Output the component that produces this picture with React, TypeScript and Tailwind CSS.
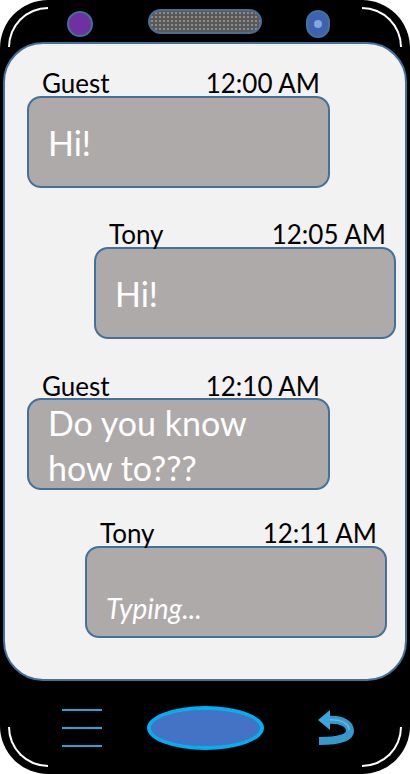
import type { ReactNode } from 'react';

interface MessageProps {
  name: string;
  time: string;
  offset: string;
  width: string;
  spacing: string;
  children: ReactNode;
  bodyClass: string;
}

function Message({ name, time, offset, width, spacing, children, bodyClass }: MessageProps) {
  return (
    <div className={`${offset} ${width} ${spacing}`}>
      <div className="flex h-[26px] justify-between pl-[15px] pr-[10px] text-[26px] leading-[26px] text-black">
        <span>{name}</span>
        <span>{time}</span>
      </div>
      <div
        className={`flex h-[92px] rounded-[14px] border-2 border-[#41719c] bg-[#aeaaaa] pl-[19px] text-white ${bodyClass}`}
      >
        {children}
      </div>
    </div>
  );
}

function BackArrow() {
  return (
    <svg width="44" height="46" viewBox="0 0 44 46" className="ml-[48px]">
      <path
        d="M16 15 C30 14, 38 19, 38 26 C38 33, 26 36, 7 36"
        fill="none"
        stroke="#3aa6de"
        strokeOpacity="0.92"
        strokeWidth="8"
      />
      <path d="M16 15 C30 14, 37 19, 37 25" fill="none" stroke="#7cc6ee" strokeWidth="1.5" strokeOpacity="0.7" />
      <polygon points="6,15 18,5 18,25" fill="#3aa6de" />
    </svg>
  );
}

export default function App() {
  return (
    <div className="h-[774px] w-[410px] bg-white font-['Lato',sans-serif]">
      <div className="relative flex h-full flex-col rounded-[48px] bg-black">
        {/* corner highlights */}
        <div className="absolute left-[8px] top-[7px] h-[40px] w-[40px] rounded-tl-[40px] border-l-2 border-t-2 border-white" />
        <div className="absolute right-[8px] top-[7px] h-[40px] w-[40px] rounded-tr-[40px] border-r-2 border-t-2 border-white" />
        <div className="absolute bottom-[7px] left-[8px] h-[40px] w-[40px] rounded-bl-[40px] border-b-2 border-l-2 border-white" />
        <div className="absolute bottom-[7px] right-[8px] h-[40px] w-[40px] rounded-br-[40px] border-b-2 border-r-2 border-white" />

        <div className="relative flex h-[42px] items-start">
          <div className="ml-[67px] mt-[11px] h-[26px] w-[26px] rounded-full border-2 border-[#41719c] bg-[#7030a0]" />
          <div className="ml-[55px] mt-[9px] h-[25px] w-[114px] rounded-full border-2 border-[#4a6f96] bg-[#595959] bg-[radial-gradient(#8c8c8c_0.8px,transparent_1px)] bg-[length:4px_4px]" />
          <div className="ml-[44px] mt-[10px] flex h-[28px] w-[24px] items-center justify-center rounded-full border-2 border-[#41719c] bg-[#3d62b0]">
            <div className="h-[8px] w-[8px] rounded-full bg-[#86a6dc]" />
          </div>
        </div>

        <div className="relative mx-[3px] flex h-[639px] flex-col rounded-[40px] border-2 border-[#41719c] bg-[#f2f2f2] pt-[26px]">
          <Message name="Guest" time="12:00 AM" offset="ml-[22px]" width="w-[303px]" spacing="" bodyClass="items-center text-[34px] leading-[45px]">
            Hi!
          </Message>
          <Message name="Tony" time="12:05 AM" offset="ml-[89px]" width="w-[302px]" spacing="mt-[33px]" bodyClass="items-center text-[34px] leading-[45px]">
            Hi!
          </Message>
          <Message name="Guest" time="12:10 AM" offset="ml-[22px]" width="w-[303px]" spacing="mt-[34px]" bodyClass="items-start text-[34px] leading-[45px] -mt-px">
            <span>
              Do you know
              <br />
              how to???
            </span>
          </Message>
          <Message name="Tony" time="12:11 AM" offset="ml-[80px]" width="w-[302px]" spacing="mt-[30px]" bodyClass="items-end pb-[13px] text-[28px] italic leading-[30px]">
            Typing...
          </Message>
        </div>

        <nav className="relative flex flex-1 items-center">
          <div className="ml-[62px] flex w-[40px] flex-col gap-[16px]">
            <div className="h-[2px] bg-[#29a3dc]" />
            <div className="h-[2px] bg-[#29a3dc]" />
            <div className="h-[2px] bg-[#29a3dc]" />
          </div>
          <div className="ml-[45px] h-[44px] w-[117px] rounded-[50%] border-[4px] border-[#00b0f0] bg-[#4472c4]" />
          <BackArrow />
        </nav>
      </div>
    </div>
  );
}
